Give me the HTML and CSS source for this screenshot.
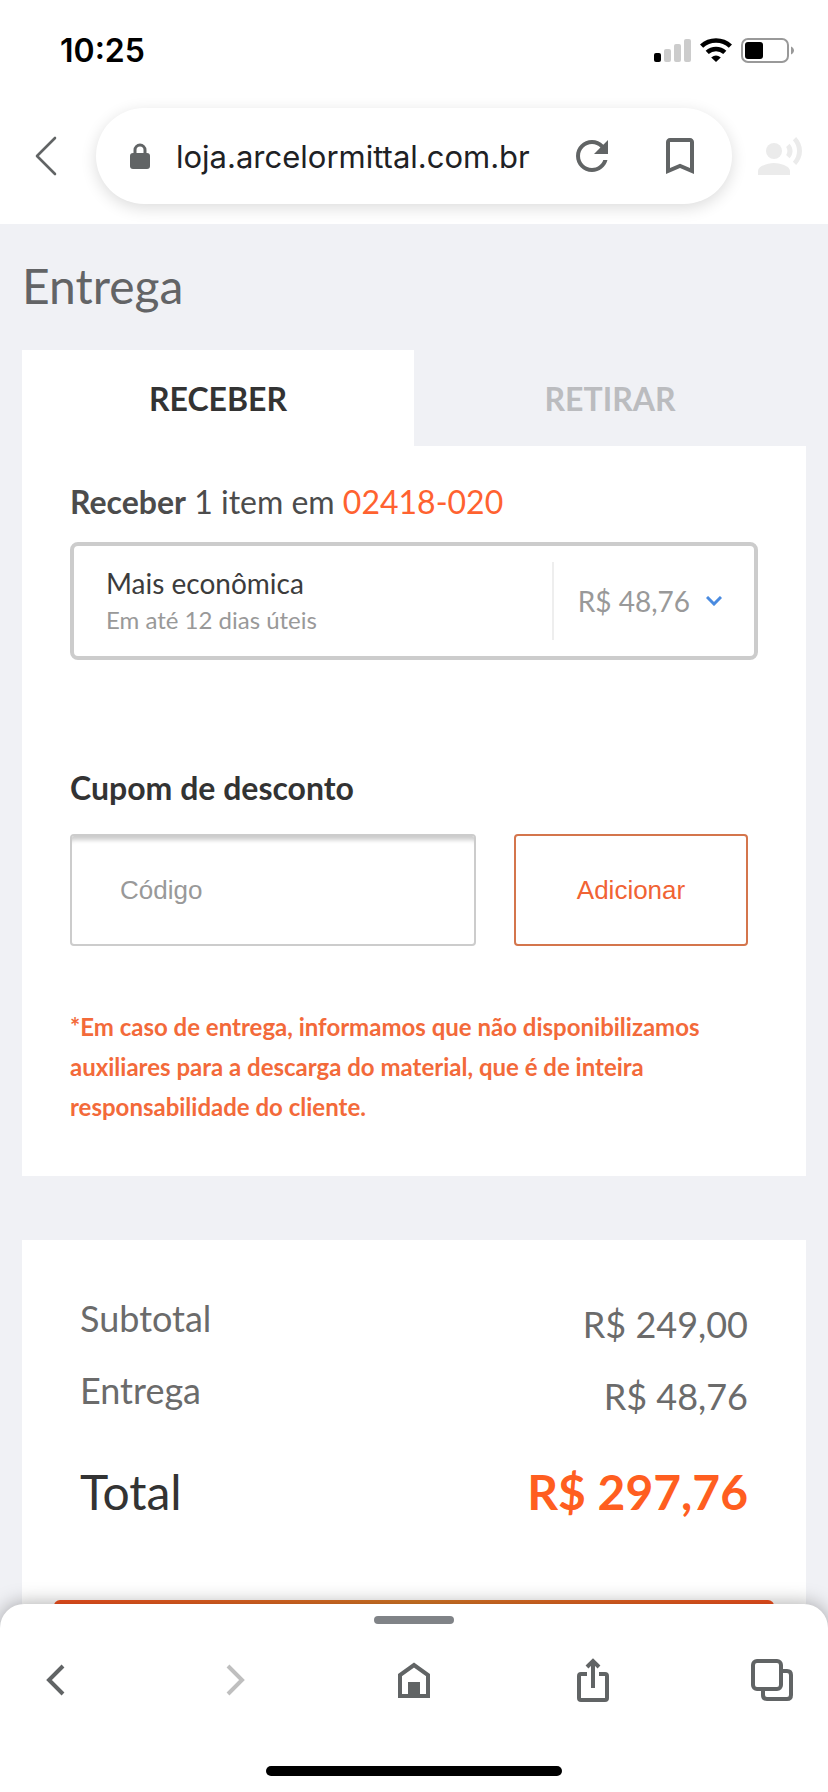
FILE: index.html
```html
<!DOCTYPE html>
<html lang="pt-BR">
<head>
    <meta charset="UTF-8">
    <meta name="viewport" content="width=device-width, initial-scale=1.0">
    <title>Entrega</title>
    <link rel="stylesheet" href="styles.css">
</head>
<body>
    <header class="browser-top">
        <div class="status-bar">
            <span class="time">10:25</span>
            <div class="status-icons">
                <svg width="37" height="24" viewBox="0 0 37 24">
                    <rect x="0" y="15" width="7" height="9" rx="2" fill="#000"/>
                    <rect x="10" y="11" width="7" height="13" rx="2" fill="#ccc"/>
                    <rect x="20" y="6" width="7" height="18" rx="2" fill="#ccc"/>
                    <rect x="30" y="1" width="7" height="23" rx="2" fill="#ccc"/>
                </svg>
                <svg width="32" height="24" viewBox="0 0 32 24">
                    <path d="M1.6 8.2A21 21 0 0 1 30.4 8.2" fill="none" stroke="#000" stroke-width="4.6"/>
                    <path d="M7.2 14.4A13 13 0 0 1 24.8 14.4" fill="none" stroke="#000" stroke-width="4.6"/>
                    <path d="M11.2 19.4Q16 15.4 20.8 19.4L16 24Z" fill="#000"/>
                </svg>
                <svg width="53" height="25" viewBox="0 0 53 25">
                    <rect x="1" y="1" width="46" height="23" rx="6" fill="none" stroke="#999" stroke-width="2"/>
                    <rect x="4" y="4" width="18" height="17" rx="3" fill="#000"/>
                    <path d="M50 8.5C52 9.5 53 11 53 12.5S52 15.5 50 16.5Z" fill="#999"/>
                </svg>
            </div>
        </div>
        <div class="toolbar">
            <button class="toolbar-back" type="button" aria-label="Voltar">
                <svg width="22" height="40" viewBox="0 0 22 40">
                    <path d="M20 2L2 20L20 38" fill="none" stroke="#616465" stroke-width="2.6" stroke-linecap="round" stroke-linejoin="round"/>
                </svg>
            </button>
            <div class="address">
                <svg width="20" height="26" viewBox="0 0 20 26">
                    <path d="M5 12V7a5 5 0 0 1 10 0V12" fill="none" stroke="#616465" stroke-width="3"/>
                    <rect x="0" y="10" width="20" height="16" rx="3" fill="#616465"/>
                </svg>
                <input class="url" type="text" value="loja.arcelormittal.com.br" aria-label="Endereço" readonly>
                <button type="button" aria-label="Recarregar">
                    <svg width="32" height="32" viewBox="4 4 16 16" fill="#616465">
                        <path d="M17.65 6.35C16.2 4.9 14.21 4 12 4c-4.42 0-7.99 3.58-7.99 8s3.57 8 7.99 8c3.73 0 6.84-2.55 7.73-6h-2.08c-.82 2.33-3.04 4-5.65 4-3.31 0-6-2.69-6-6s2.69-6 6-6c1.66 0 3.14.69 4.22 1.78L13 11h7V4l-2.35 2.35z"/>
                    </svg>
                </button>
                <button class="bookmark" type="button" aria-label="Favoritos">
                    <svg width="28" height="36" viewBox="5 3 14 18" fill="#616465">
                        <path d="M17 3H7c-1.1 0-1.99.9-1.99 2L5 21l7-3 7 3V5c0-1.1-.9-2-2-2zm0 15l-5-2.18L7 18V5h10v13z"/>
                    </svg>
                </button>
            </div>
            <button type="button" aria-label="Busca por voz">
                <svg width="44" height="38" viewBox="1 2 22 19" fill="#ebebeb">
                    <circle cx="9" cy="9" r="4"/>
                    <path d="M9 15c-2.67 0-8 1.34-8 4v2h16v-2c0-2.66-5.33-4-8-4z"/>
                    <path d="M16.76 5.36l-1.68 1.69c.84 1.18.84 2.71 0 3.89l1.68 1.69c2.02-2.02 2.02-5.07 0-7.27z"/>
                    <path d="M20.07 2l-1.63 1.63c2.77 3.02 2.77 7.56 0 10.74L20.07 16c3.9-3.89 3.91-9.95 0-14z"/>
                </svg>
            </button>
        </div>
    </header>

    <main class="page">
        <h1>Entrega</h1>
        <div class="tabs">
            <button class="tab active" type="button">RECEBER</button>
            <button class="tab" type="button">RETIRAR</button>
        </div>
        <section class="panel">
            <p class="receive"><strong>Receber</strong> 1 item em <a href="#">02418-020</a></p>
            <button class="shipping" type="button" aria-haspopup="listbox">
                <span class="shipping-info">
                    <span class="shipping-name">Mais econômica</span>
                    <span class="shipping-time">Em até 12 dias úteis</span>
                </span>
                <span class="shipping-price">
                    R$ 48,76
                    <svg width="16" height="10" viewBox="0 0 16 10">
                        <path d="M1 1L8 8L15 1" fill="none" stroke="#4a8be0" stroke-width="3"/>
                    </svg>
                </span>
            </button>

            <form class="coupon">
                <label for="coupon">Cupom de desconto</label>
                <div class="coupon-row">
                    <input id="coupon" type="text" placeholder="Código">
                    <button type="button">Adicionar</button>
                </div>
            </form>

            <p class="note">*Em caso de entrega, informamos que não disponibilizamos auxiliares para a descarga do material, que é de inteira responsabilidade do cliente.</p>
        </section>

        <section class="summary">
            <dl>
                <div class="row">
                    <dt>Subtotal</dt>
                    <dd>R$ 249,00</dd>
                </div>
                <div class="row">
                    <dt>Entrega</dt>
                    <dd>R$ 48,76</dd>
                </div>
                <div class="row total">
                    <dt>Total</dt>
                    <dd>R$ 297,76</dd>
                </div>
            </dl>
            <button class="checkout" type="button" aria-label="Continuar"></button>
        </section>
    </main>

    <footer class="browser-bottom">
        <div class="handle"></div>
        <nav class="nav">
            <button type="button" aria-label="Voltar">
                <svg width="20" height="32" viewBox="0 0 20 32">
                    <path d="M17 2L3 16L17 30" fill="none" stroke="#616465" stroke-width="4"/>
                </svg>
            </button>
            <button type="button" aria-label="Avançar">
                <svg width="20" height="32" viewBox="0 0 20 32">
                    <path d="M3 2L17 16L3 30" fill="none" stroke="#bfbfbf" stroke-width="4"/>
                </svg>
            </button>
            <button type="button" aria-label="Início">
                <svg width="32" height="36" viewBox="0 0 32 36">
                    <path d="M2 34V13L16 3L30 13V34Z" fill="none" stroke="#616465" stroke-width="4"/>
                    <rect x="10" y="20" width="12" height="14" fill="#616465"/>
                </svg>
            </button>
            <button type="button" aria-label="Compartilhar">
                <svg width="32" height="44" viewBox="0 0 32 44" fill="none" stroke="#616465" stroke-width="4">
                    <path d="M10 16H4Q2 16 2 18V40Q2 42 4 42H28Q30 42 30 40V18Q30 16 28 16H22"/>
                    <path d="M16 30V3M10 9L16 3L22 9"/>
                </svg>
            </button>
            <button type="button" aria-label="Abas">
                <svg width="42" height="42" viewBox="0 0 42 42" fill="none" stroke="#616465" stroke-width="4">
                    <rect x="2" y="2" width="28" height="28" rx="4"/>
                    <path d="M32 12H36Q40 12 40 16V36Q40 40 36 40H16Q12 40 12 36V32"/>
                </svg>
            </button>
        </nav>
        <div class="home-indicator"></div>
    </footer>
</body>
</html>
```
FILE: styles.css
```css
* {
    box-sizing: border-box;
}

body {
    display: flex;
    flex-direction: column;
    height: 100vh;
    margin: 0;
    background-color: #f0f1f5;
    font-family: Lato, sans-serif;
    color: #333;
}

h1,
p,
dl,
dd {
    margin: 0;
}

button {
    padding: 0;
    border: 0;
    background: none;
    font-family: inherit;
    color: inherit;
}

svg {
    display: block;
    flex-shrink: 0;
}

/* Browser top */
.browser-top {
    background-color: #fff;
}

.status-bar {
    display: flex;
    justify-content: space-between;
    align-items: center;
    height: 100px;
    padding: 0 34px 0 60px;
}

.time {
    font-family: Inter, sans-serif;
    font-size: 32px;
    font-weight: 600;
    color: #000;
}

.status-icons {
    display: flex;
    align-items: center;
    gap: 9px;
}

.toolbar {
    display: flex;
    align-items: center;
    gap: 26px;
    padding: 8px 26px 20px 22px;
}

.toolbar-back {
    display: flex;
    justify-content: center;
    width: 48px;
}

.address {
    display: flex;
    flex: 1;
    align-items: center;
    min-width: 0;
    height: 96px;
    padding: 0 38px 0 34px;
    border-radius: 48px;
    background-color: #fff;
    box-shadow: 0 4px 16px rgba(0, 0, 0, 0.14);
}

.url {
    flex: 1;
    min-width: 0;
    margin: 0 16px 0 26px;
    padding: 0;
    border: 0;
    background: none;
    font-family: Inter, sans-serif;
    font-size: 31px;
    color: #202124;
}

.bookmark {
    margin-left: 58px;
}

/* Page */
.page {
    flex: 1;
    min-height: 0;
    padding: 33px 22px 0;
    overflow-y: auto;
    scrollbar-width: none;
}

h1 {
    margin-bottom: 35px;
    font-size: 48px;
    font-weight: 400;
    line-height: 58px;
    color: #636466;
}

.tabs {
    display: grid;
    grid-template-columns: 1fr 1fr;
}

.tab {
    height: 96px;
    font-size: 32px;
    font-weight: 700;
    color: #bbbcbf;
}

.tab.active {
    background-color: #fff;
    color: #333;
}

.panel {
    padding: 36px 48px 49px;
    background-color: #fff;
}

.receive {
    margin-bottom: 20px;
    font-size: 32px;
    line-height: 40px;
    color: #4c4c4c;
}

.receive a {
    color: #ff6230;
    text-decoration: none;
}

.shipping {
    display: flex;
    width: 100%;
    padding: 16px 32px;
    border: 4px solid #ccc;
    border-radius: 8px;
    text-align: left;
}

.shipping-info {
    display: flex;
    flex: 1;
    flex-direction: column;
    justify-content: center;
    height: 78px;
}

.shipping-name {
    font-size: 28px;
    line-height: 38px;
    color: #3c3c3c;
}

.shipping-time {
    font-size: 24px;
    line-height: 36px;
    color: #999;
}

.shipping-price {
    display: flex;
    align-items: center;
    gap: 16px;
    padding-left: 24px;
    border-left: 2px solid #eee;
    font-size: 28px;
    color: #999;
}

.coupon {
    margin-top: 108px;
}

.coupon label {
    display: block;
    margin-bottom: 26px;
    font-size: 32px;
    font-weight: 700;
    line-height: 40px;
}

.coupon-row {
    display: flex;
    gap: 38px;
    padding-right: 10px;
}

.coupon input,
.coupon button {
    height: 112px;
    border-radius: 4px;
    font-family: "Liberation Sans", Arial, sans-serif;
    font-size: 26px;
}

.coupon input {
    flex: 1;
    min-width: 0;
    padding: 0 48px;
    border: 2px solid #ccc;
    box-shadow: inset 0 8px 4px -4px #ccc;
}

.coupon input::placeholder {
    color: #999;
}

.coupon button {
    width: 234px;
    border: 2px solid #d4754c;
    color: #f16334;
}

.note {
    margin-top: 61px;
    font-size: 24px;
    font-weight: 700;
    line-height: 40px;
    color: #f36a3a;
}

/* Order summary */
.summary {
    margin-top: 64px;
    padding: 56px 32px 48px;
    background-color: #fff;
}

.summary dl {
    padding: 0 26px;
}

.row {
    display: flex;
    justify-content: space-between;
    margin-bottom: 22px;
    font-size: 36px;
    line-height: 44px;
    color: #6b6b6b;
}

.row dd {
    padding-top: 6px;
}

.row.total {
    margin: 45px 0 79px;
    font-size: 48px;
    line-height: 58px;
    color: #333;
}

.total dd {
    padding-top: 0;
    font-weight: 700;
    color: #ff5e20;
}

.checkout {
    display: block;
    width: 100%;
    height: 96px;
    border-radius: 6px;
    background: linear-gradient(90deg, #f4511e, #d97a26 50%, #f4511e);
}

/* Browser bottom */
.browser-bottom {
    z-index: 1;
    padding: 12px 34px 16px;
    border-radius: 24px 24px 0 0;
    background-color: #fff;
    box-shadow: 0 0 20px rgba(0, 0, 0, 0.35);
}

.handle {
    width: 80px;
    height: 8px;
    margin: 0 auto;
    border-radius: 4px;
    background-color: #808387;
}

.nav {
    display: flex;
    justify-content: space-between;
}

.nav button {
    display: flex;
    align-items: center;
    justify-content: center;
    width: 44px;
    height: 112px;
}

.home-indicator {
    width: 296px;
    height: 10px;
    margin: 30px auto 0;
    border-radius: 5px;
    background-color: #000;
}
```
